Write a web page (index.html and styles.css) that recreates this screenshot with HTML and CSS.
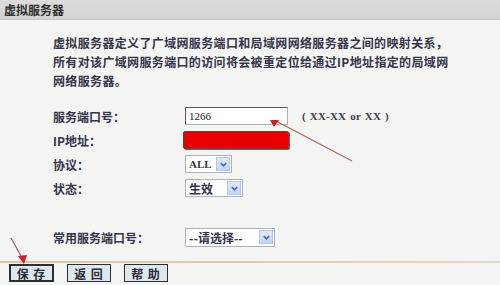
FILE: index.html
```html
<!DOCTYPE html>
<html lang="zh-CN">
<head>
<meta charset="utf-8">
<title>虚拟服务器</title>
<link rel="stylesheet" href="styles.css">
</head>
<body>
<div class="page">
  <div class="titlebar">虚拟服务器</div>
  <div class="content">
    <p class="desc">虚拟服务器定义了广域网服务端口和局域网网络服务器之间的映射关系，<br>所有对该广域网服务端口的访问将会被重定位给通过IP地址指定的局域网<br>网络服务器。</p>
    <div class="form">
      <div class="label">服务端口号：</div>
      <div class="field"><span class="textbox">1266</span><span class="hint">( XX-XX or XX )</span></div>
      <div class="label">IP地址：</div>
      <div class="field"><span class="redbox"></span></div>
      <div class="label">协议：</div>
      <div class="field"><span class="select w-all"><span class="sel-text">ALL</span><span class="sel-btn"><svg viewBox="0 0 10 10" width="9" height="9"><path d="M2 3.5 L5 6.5 L8 3.5" fill="none" stroke="#3a6fc4" stroke-width="1.8"/></svg></span></span></div>
      <div class="label">状态：</div>
      <div class="field"><span class="select w-state"><span class="sel-text">生效</span><span class="sel-btn"><svg viewBox="0 0 10 10" width="9" height="9"><path d="M2 3.5 L5 6.5 L8 3.5" fill="none" stroke="#3a6fc4" stroke-width="1.8"/></svg></span></span></div>
    </div>
    <div class="form common">
      <div class="label">常用服务端口号：</div>
      <div class="field"><span class="select w-common"><span class="sel-text">--请选择--</span><span class="sel-btn"><svg viewBox="0 0 10 10" width="9" height="9"><path d="M2 3.5 L5 6.5 L8 3.5" fill="none" stroke="#3a6fc4" stroke-width="1.8"/></svg></span></span></div>
    </div>
  </div>
  <div class="divider"></div>
  <div class="buttons">
    <span class="btn focused">保 存</span>
    <span class="btn">返 回</span>
    <span class="btn">帮 助</span>
  </div>
  <svg class="annot" width="500" height="285" viewBox="0 0 500 285">
    <line x1="352" y1="161" x2="276" y2="121" stroke="#a86a62" stroke-width="1.3"/>
    <path d="M270 120 L279 120 L274 127 Z" fill="#c8202a"/>
    <line x1="11" y1="238" x2="22" y2="258" stroke="#8a6a70" stroke-width="1.3"/>
    <path d="M18 256 L27 255 L24 264 Z" fill="#c8202a"/>
  </svg>
</div>
</body>
</html>
```
FILE: styles.css
```css
html, body {
  margin: 0;
  padding: 0;
}
body {
  background: #f4f4f3;
  font-family: "Noto Sans CJK SC", "Liberation Sans", sans-serif;
  color: #34344a;
}
.page {
  position: relative;
  width: 500px;
  height: 285px;
  overflow: hidden;
}
.titlebar {
  height: 20px;
  line-height: 19px;
  padding-left: 4px;
  font-size: 12px;
  font-weight: bold;
  color: #2e2e2e;
  background: linear-gradient(#dcdcdc, #d2d2d2);
  border-bottom: 1px solid #c8c8c8;
  box-sizing: border-box;
}
.content {
  padding-left: 53px;
}
.desc {
  margin: 13px 0 0 0;
  font-size: 12px;
  line-height: 19px;
  font-weight: bold;
  letter-spacing: 0.35px;
}
.form {
  display: grid;
  grid-template-columns: 132px auto;
  grid-auto-rows: 18px;
  row-gap: 6px;
  margin-top: 17px;
  font-size: 12px;
  font-weight: bold;
}
.form.common {
  margin-top: 31px;
  height: 19px;
}
.label {
  display: flex;
  align-items: center;
}
.field {
  display: flex;
  align-items: center;
}
.textbox {
  box-sizing: border-box;
  width: 103px;
  height: 18px;
  background: #fff;
  border: 1px solid #5a5a5a;
  border-right-color: #b0b0b0;
  border-bottom-color: #b0b0b0;
  font-family: "Liberation Serif", serif;
  font-weight: normal;
  font-size: 11px;
  line-height: 16px;
  padding-left: 3px;
  color: #222;
}
.hint {
  margin-left: 14px;
  font-family: "Liberation Serif", serif;
  font-size: 11px;
  font-weight: bold;
  color: #3a3a50;
  letter-spacing: 0.2px;
  word-spacing: 1px;
}
.redbox {
  box-sizing: border-box;
  width: 106px;
  height: 18px;
  margin-left: -2px;
  background: #e60000;
  border: 1px solid #8a3030;
  border-radius: 2px;
  box-shadow: 1px 1px 0 #a05050;
}
.select {
  box-sizing: border-box;
  display: flex;
  align-items: center;
  height: 18px;
  background: #fff;
  border: 1px solid #a8b4c2;
  padding-left: 3px;
  font-weight: bold;
}
.w-common {
  height: 19px;
}
.sel-text {
  flex: 1;
  font-size: 12px;
  color: #34344a;
}
.w-all .sel-text {
  font-family: "Liberation Serif", serif;
  font-size: 11px;
}
.w-all { width: 47px; }
.w-state { width: 58px; }
.w-common { width: 90px; }
.sel-btn {
  width: 14px;
  height: 14px;
  margin-right: 1px;
  background: linear-gradient(#dfe9f8, #c3d4ee);
  border: 1px solid #b8c8e0;
  box-sizing: border-box;
  display: flex;
  align-items: center;
  justify-content: center;
}
.divider {
  margin-top: 14px;
  height: 2px;
  background: linear-gradient(90deg, #d9c6aa, #dccdb6 60%, #e2d8cc);
}
.buttons {
  display: flex;
  gap: 13px;
  padding-left: 9px;
  margin-top: 1px;
}
.btn {
  box-sizing: border-box;
  width: 44px;
  height: 18px;
  display: flex;
  align-items: center;
  justify-content: center;
  background: #dde7ee;
  border: 1px solid #2e2e2e;
  font-size: 12px;
  font-weight: bold;
  color: #2a2a3a;
  letter-spacing: 1px;
}
.btn.focused {
  border-width: 2px;
  width: 45px;
}
.annot {
  position: absolute;
  left: 0;
  top: 0;
  pointer-events: none;
}
```
